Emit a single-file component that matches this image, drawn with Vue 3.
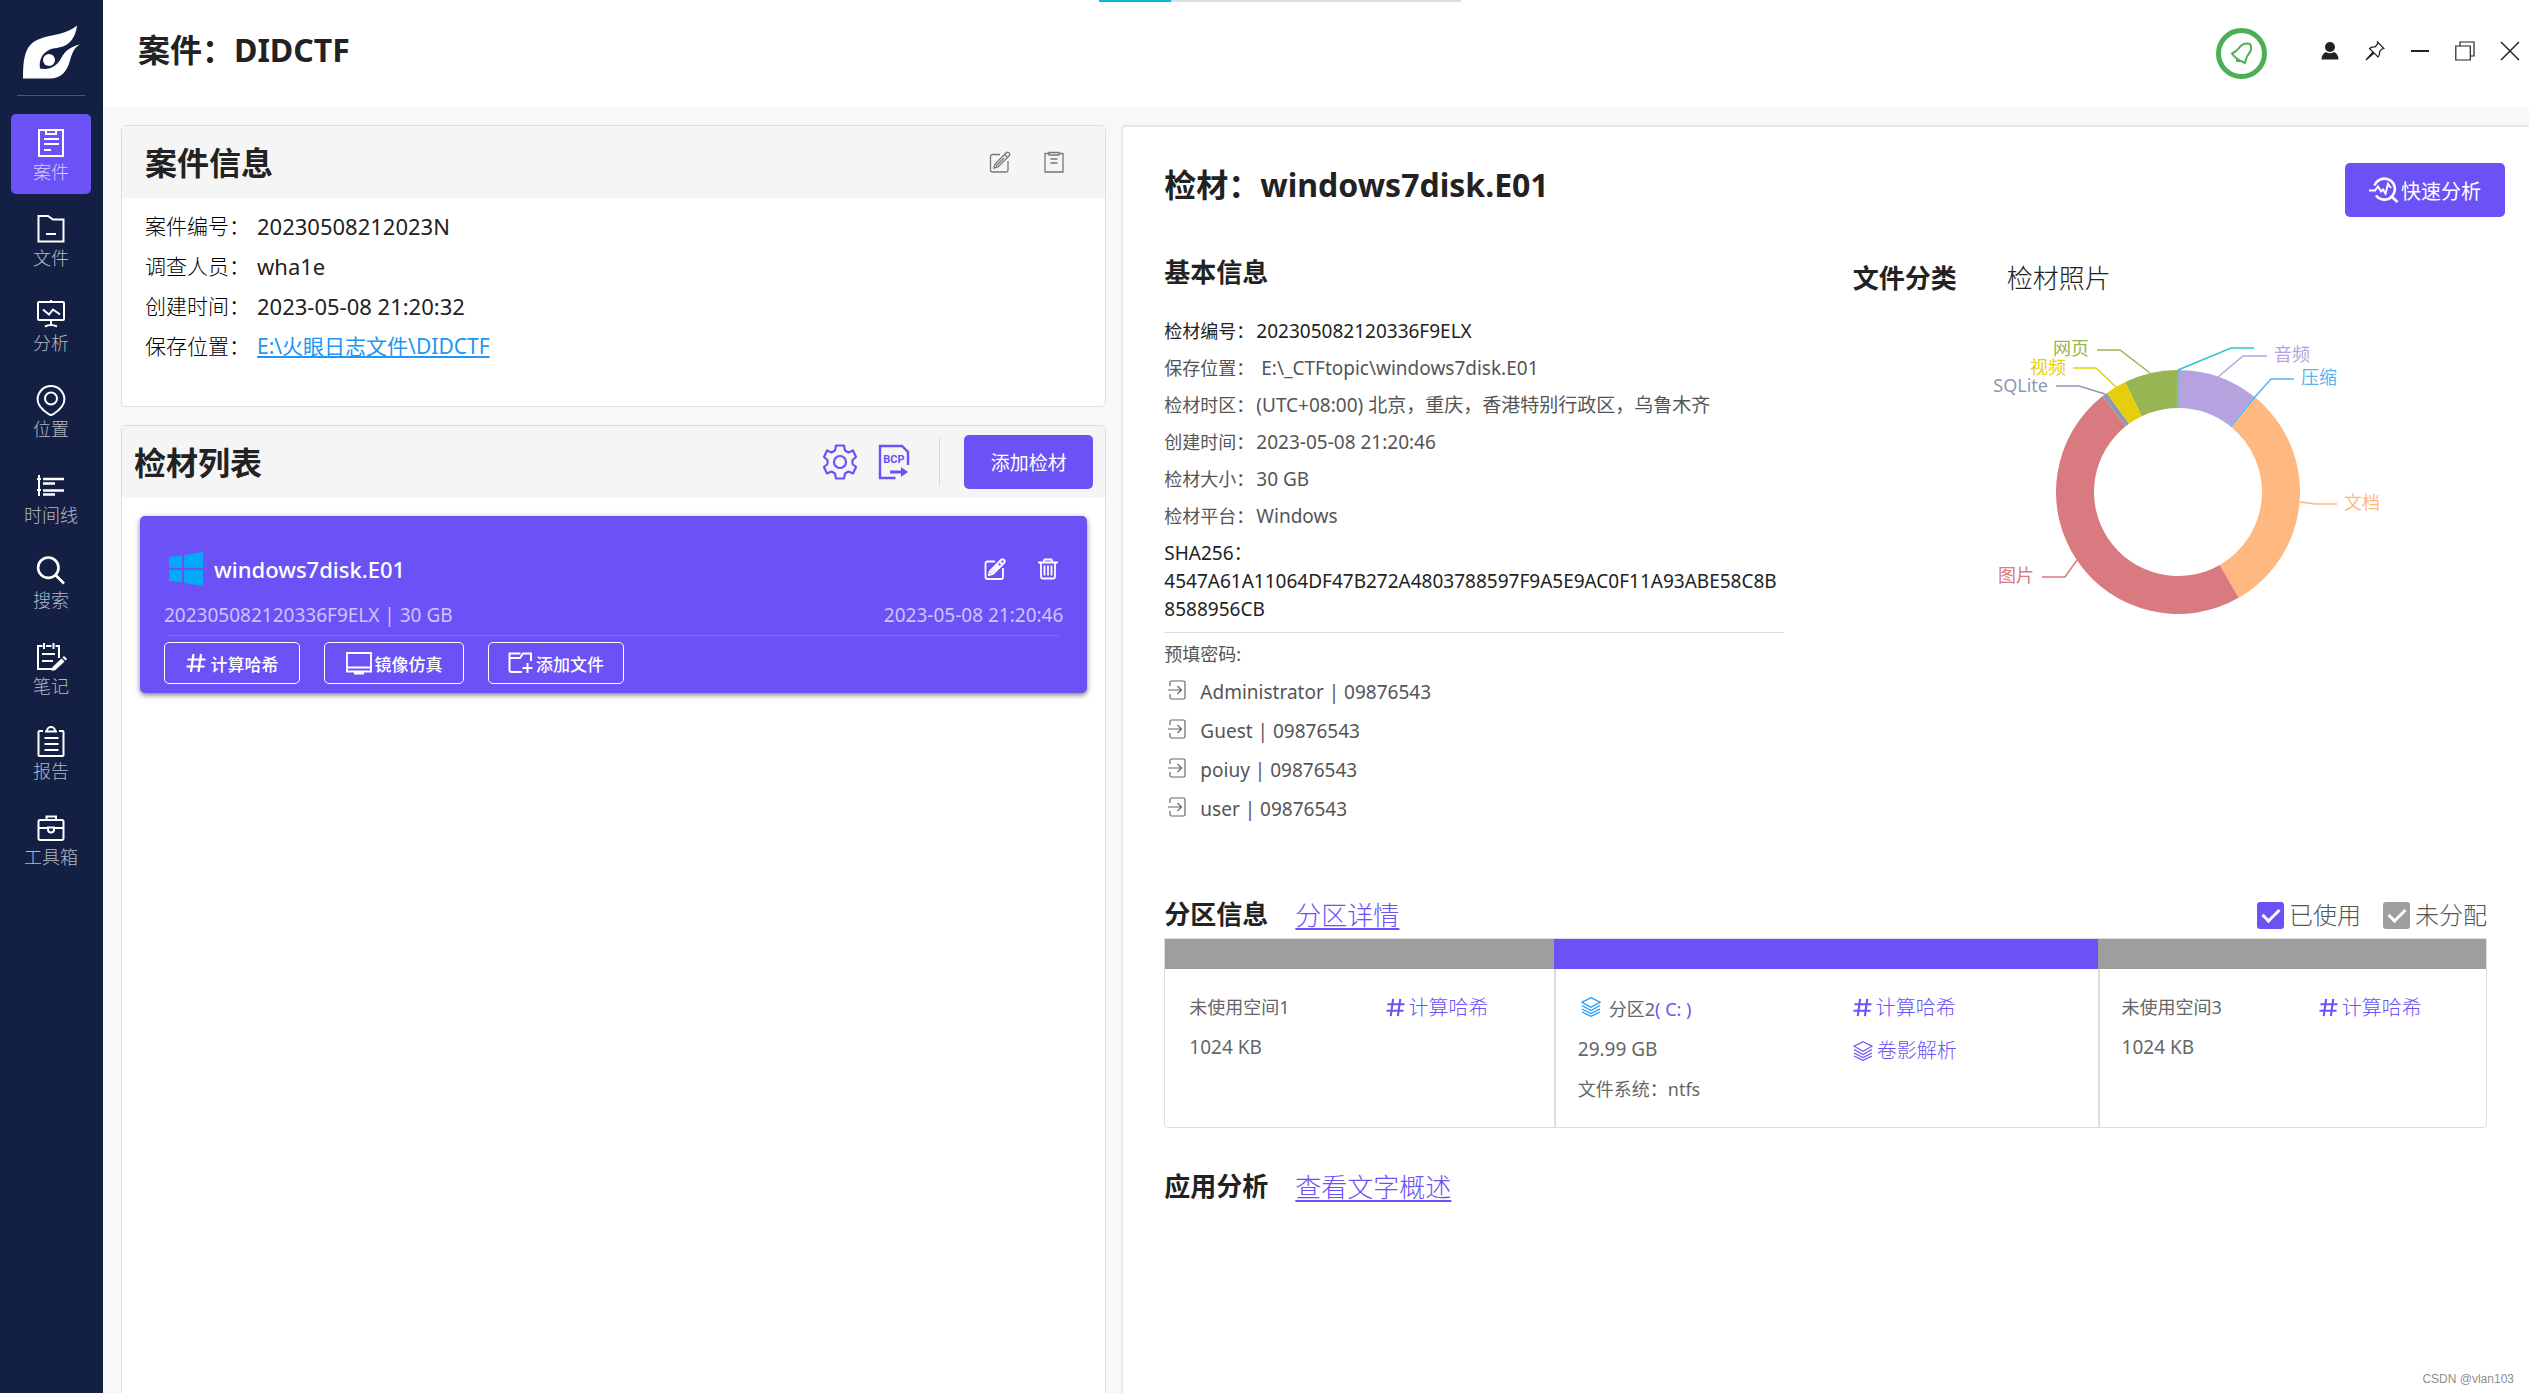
<script setup>
import { ref } from 'vue'

const nav = [
  { label: '案件', lines: ['M4 3h24v26H4z', 'M11 3v4h10V3', 'M9 12h15M9 17h15M9 23h7'] },
  { label: '文件', lines: ['M3.5 3H13l5 3.5h10.500V28.500h-25z', 'M11 21h10'] },
  { label: '分析', lines: ['M4 4h24a1 1 0 0 1 1 1v16a1 1 0 0 1-1 1H4a1 1 0 0 1-1-1V5a1 1 0 0 1 1-1z', 'M16 2v2M16 22v5', 'M10 28.500q6-3 12 0', 'M8 11.500l6 5 4-5 7 5'] },
  { label: '位置', lines: ['M16 2a13.400 13.400 0 0 1 13.400 13.400C29.400 21 23 27 18.500 30a4 4 0 0 1-5 0C9 27 2.600 21 2.600 15.400A13.400 13.400 0 0 1 16 2z', 'M22 14.500a6 6 0 1 1-12 0 6 6 0 1 1 12 0z'] },
  { label: '时间线', lines: ['M4 5v21M2 9h4M2 20h4'], bold: ['M8 9h21M8 13.500h12M8 20.500h21M8 24.500h12'] },
  { label: '搜索', bold: ['M23.500 12.700a10.200 10.200 0 1 1-20.400 0 10.200 10.200 0 1 1 20.400 0z', 'M20.500 20l8.500 8.500'] },
  { label: '笔记', lines: ['M17 28H3V5h4.500M11 5h5.500M20.500 5H24v12', 'M9 2v6M18.500 2v6', 'M7 13h13M7 20h11'], shapes: ['M17.500 26l9-8.500 3 3-9 8.500-4 1z', 'M27.500 16.500l1.500-1.500 3 3-1.500 1.500z'] },
  { label: '报告', lines: ['M8 5H4.500a1 1 0 0 0-1 1v23a1 1 0 0 0 1 1h23a1 1 0 0 0 1-1V6a1 1 0 0 0-1-1H24', 'M10 5.500h12M12 5a4 4 0 0 1 8 0', 'M9.500 12h14M9.500 18h14M9.500 24h14'] },
  { label: '工具箱', lines: ['M5 8h22a1.500 1.500 0 0 1 1.500 1.500v17A1.500 1.500 0 0 1 27 28H5a1.500 1.500 0 0 1-1.500-1.500v-17A1.500 1.500 0 0 1 5 8z', 'M11.500 8V4.500h9.500V8', 'M3.500 16h9M19.500 16h9', 'M13 15.500h6v2a3 3 0 0 1-6 0z'] }
]

const caseInfo = [
  { label: '案件编号：', value: '20230508212023N' },
  { label: '调查人员：', value: 'wha1e' },
  { label: '创建时间：', value: '2023-05-08 21:20:32' },
  { label: '保存位置：', value: 'E:\\火眼日志文件\\DIDCTF', link: true }
]

const evidence = [
  { label: '检材编号：', value: '202305082120336F9ELX', dark: true },
  { label: '保存位置：', value: '\u00a0E:\\_CTFtopic\\windows7disk.E01' },
  { label: '检材时区：', value: '(UTC+08:00) 北京，重庆，香港特别行政区，乌鲁木齐' },
  { label: '创建时间：', value: '2023-05-08 21:20:46' },
  { label: '检材大小：', value: '30 GB' },
  { label: '检材平台：', value: 'Windows' }
]

const accounts = ['Administrator', 'Guest', 'poiuy', 'user']

const partitions = [
  { name: '未使用空间1', size: '1024 KB' },
  { name: '分区2', drive: '( C: )', size: '29.99 GB', fs: '文件系统：ntfs', used: true },
  { name: '未使用空间3', size: '1024 KB' }
]

const showUsed = ref(true)
const showFree = ref(true)

const CX = 199
const CY = 152
const R = 122
const r = 84
const point = (deg, radius) => {
  const a = (deg * Math.PI) / 180
  return `${(CX + radius * Math.sin(a)).toFixed(2)} ${(CY - radius * Math.cos(a)).toFixed(2)}`
}
const ring = (from, to) => {
  const large = to - from > 180 ? 1 : 0
  return `M${point(from, R)}A${R} ${R} 0 ${large} 1 ${point(to, R)}L${point(to, r)}A${r} ${r} 0 ${large} 0 ${point(from, r)}Z`
}
const slices = [
  { label: '音频', color: '#b6a2de', from: 0, to: 38.5, line: '239,37 264,16 288,16', x: 295, y: 15 },
  { label: '压缩', color: '#5ab1ef', from: 38.5, to: 39.5, line: '275,58 292,39 315,39', x: 322, y: 38 },
  { label: '文档', color: '#ffb980', from: 39.5, to: 150.2, line: '321,162 336,164 358,164', x: 365, y: 163 },
  { label: '图片', color: '#d87a80', from: 150.2, to: 321.7, line: '98,220 86,237 63,237', x: 55, y: 236, end: true },
  { label: 'SQLite', color: '#8d98b3', from: 321.7, to: 324.3, line: '126,54 100,46 77,46', x: 69, y: 46, end: true },
  { label: '视频', color: '#e5cf0d', from: 324.3, to: 334.4, line: '137,47 117,28 94,28', x: 87, y: 28, end: true },
  { label: '网页', color: '#97b552', from: 334.4, to: 359.6, line: '171,33 141,10 118,10', x: 110, y: 9, end: true },
  { label: '', color: '#2ec7c9', from: 359.6, to: 360.2, line: '199,30 252,8 275,8' }
]
const labelled = slices.filter((s) => s.label)
</script>

<template>
  <div class="app">
    <aside class="sidebar">
      <svg class="logo" viewBox="0 0 60 54" aria-hidden="true">
        <path fill="#fff" d="M1 52.500C1 38 2 29 6 22 12 12 24 11 37 8c8-2 14-5 18-8.500-1 8-4 15-10 19-6 4-14 3-19 6-7 4-9 11-8 18 10 2 17-3 21-10 4-8 10-12 19-14-6 3-8 9-10 16-3 11-9 18-20 18H1z" />
        <circle cx="27" cy="34" r="6" fill="#fff" />
      </svg>
      <hr class="rule" />
      <nav class="nav">
        <a v-for="(n, i) in nav" :key="n.label" href="#" class="nav-item" :class="{ active: i === 0 }">
          <svg class="nav-icon" viewBox="0 0 32 32" aria-hidden="true">
            <path v-for="d in n.lines" :key="d" :d="d" fill="none" stroke="#fff" stroke-width="2" />
            <path v-for="d in n.bold" :key="d" :d="d" fill="none" stroke="#fff" stroke-width="2.600" />
            <path v-for="d in n.shapes" :key="d" :d="d" fill="#fff" />
          </svg>
          <span>{{ n.label }}</span>
        </a>
      </nav>
    </aside>

    <div class="page">
      <header class="topbar">
        <h1>案件：DIDCTF</h1>
        <div class="window-tools">
          <button class="notify" aria-label="通知">
            <svg width="24" height="24" viewBox="0 0 24 24" fill="none" stroke="#4caf50" stroke-width="2" stroke-linejoin="round">
              <path d="M2 11.500C5 10 7 9 9 6c3-4 7-5 11-4 2 4 1 8-2 11-2 2-2 5-3 8C10 19 5 16 2 11.500z" />
              <path d="M7 16v3h3" fill="#4caf50" />
            </svg>
          </button>
          <button class="tool" aria-label="用户">
            <svg viewBox="0 0 20 20" fill="#222"><circle cx="10" cy="6" r="5" /><path d="M1.500 18.500c0-4 2-6.500 4.500-7.500 2.500 1.700 5.500 1.700 8 0 2.500 1 4.500 3.500 4.500 7.500z" /></svg>
          </button>
          <button class="tool" aria-label="置顶">
            <svg viewBox="0 0 20 20" fill="none" stroke="#222" stroke-width="1.200"><path d="M12.500 1l6.500 6.500-2 .5-2.500 2.500c.5 2.500 0 4-1.500 5.500L4.500 7.500C6 6 8 5.500 10 6L12.500 3zM8 11l-7 8 8-7" /></svg>
          </button>
          <button class="tool" aria-label="最小化">
            <svg viewBox="0 0 20 20" stroke="#222" stroke-width="2"><path d="M1 10h18" /></svg>
          </button>
          <button class="tool" aria-label="还原">
            <svg viewBox="0 0 20 20" fill="none" stroke="#222" stroke-width="1.200"><path d="M.8 5h14.500v14H.8zM5 5V1h14v14h-3.700" /></svg>
          </button>
          <button class="tool" aria-label="关闭">
            <svg viewBox="0 0 20 20" stroke="#222" stroke-width="1.500"><path d="M1 1l18 18M19 1L1 19" /></svg>
          </button>
        </div>
      </header>

      <main class="columns">
        <div class="left">
          <section class="panel case-panel">
            <header class="panel-head case-head">
              <h2>案件信息</h2>
              <button class="icon-btn" aria-label="编辑案件">
                <svg width="22" height="22" viewBox="0 0 22 22" fill="none" stroke="#777" stroke-width="1.300"><path d="M11 3.500H3.500a2 2 0 0 0-2 2V19a2 2 0 0 0 2 2H17a2 2 0 0 0 2-2v-9" /><path d="M5 17l1-4L17 2a2 2 0 0 1 3 3L9 16zM15.500 3.500l3 3M7 15l8-8" /></svg>
              </button>
              <button class="icon-btn" aria-label="案件记录">
                <svg width="22" height="22" viewBox="0 0 22 22" fill="none" stroke="#777" stroke-width="1.300"><path d="M6 2.500H2V21h18V2.500h-4" /><path d="M6 1.500h10v2.500H6zM7.500 8h7M7.500 12h7" /></svg>
              </button>
            </header>
            <dl class="case-info">
              <div v-for="c in caseInfo" :key="c.label">
                <dt>{{ c.label }}</dt>
                <dd v-if="c.link"><a href="#">{{ c.value }}</a></dd>
                <dd v-else class="plain">{{ c.value }}</dd>
              </div>
            </dl>
          </section>

          <section class="panel list-panel">
            <header class="panel-head list-head">
              <h2>检材列表</h2>
              <button class="icon-btn" aria-label="设置">
                <svg width="34" height="36" viewBox="0 0 34 36" fill="none" stroke="#6b52f6" stroke-width="2.200" stroke-linejoin="round">
                  <path d="M13 1.500h8l1 5 3.500 2L30 6.500l3 6.500-3.500 3v4l3.500 3-3 6.500-4.500-2-3.500 2-1 5h-8l-1-5-3.500-2-4.500 2L1 23l3.500-3v-4L1 13l3-6.500 4.500 2 3.500-2z" />
                  <circle cx="17" cy="18" r="6" />
                </svg>
              </button>
              <button class="icon-btn" aria-label="导出BCP">
                <svg width="34" height="36" viewBox="0 0 34 36" fill="none" stroke="#6b52f6" stroke-width="2.400">
                  <path d="M18.500 34H3V2h22l6 6v13" /><path d="M13 28h12" stroke-width="3" /><path d="M24 23l7 5-7 5z" fill="#6b52f6" stroke="none" />
                  <text x="17" y="19" class="bcp">BCP</text>
                </svg>
              </button>
              <span class="bar"></span>
              <button class="primary add">添加检材</button>
            </header>

            <article class="disk">
              <div class="disk-title">
                <svg width="36" height="36" viewBox="0 0 36 36" fill="#03a9f4" aria-hidden="true"><path d="M1 6l13-1.800v12.600H1zM16 4l19-3v15.800H16zM1 19h13v12.500L1 30zM16 19h19v16l-19-3z" /></svg>
                <h3>windows7disk.E01</h3>
                <button class="icon-btn" aria-label="编辑检材">
                  <svg width="22" height="22" viewBox="0 0 22 22" fill="none" stroke="#fff" stroke-width="1.800"><path d="M11 3.500H3.500a2 2 0 0 0-2 2V19a2 2 0 0 0 2 2H17a2 2 0 0 0 2-2v-9" /><path d="M5 17l1-4L17 2a2 2 0 0 1 3 3L9 16zM15.500 3.500l3 3M7 15l8-8" /></svg>
                </button>
                <button class="icon-btn" aria-label="删除检材">
                  <svg width="22" height="22" viewBox="0 0 22 22" fill="none" stroke="#fff" stroke-width="1.800"><path d="M1 4.500h20M6.500 4l1-2.500h7l1 2.500M4 5v14a1.500 1.500 0 0 0 1.500 1.500h11A1.500 1.500 0 0 0 18 19V5M7.500 7.500v10M11 7.500v10M14.500 7.500v10" /></svg>
                </button>
              </div>
              <div class="disk-meta"><span>202305082120336F9ELX | 30 GB</span><time>2023-05-08 21:20:46</time></div>
              <hr />
              <div class="disk-actions">
                <button>
                  <svg width="20" height="20" viewBox="0 0 20 20" stroke="#fff" stroke-width="2.200"><path d="M7.500 1l-2.500 18M15 1l-2.500 18M1.500 6.500h18M.5 13.500h18" /></svg>
                  <span class="spaced">计算哈希</span>
                </button>
                <button class="wide">
                  <svg width="26" height="24" viewBox="0 0 26 24" fill="none" stroke="#fff" stroke-width="1.800"><path d="M1 2h24v18.500H1zM1 16.500h24M13 20v3M8 22.500h10" /></svg>
                  <span>镜像仿真</span>
                </button>
                <button>
                  <svg width="25" height="22" viewBox="0 0 25 22" fill="none" stroke="#fff" stroke-width="2"><path d="M14 20H3.500a2 2 0 0 1-2-2V1.500h11M1.500 6H12l3-4.500h8V9M19.500 11v10M14.500 16h10" /></svg>
                  <span>添加文件</span>
                </button>
              </div>
            </article>
          </section>
        </div>

        <section class="detail">
          <header class="detail-head">
            <h2>检材：windows7disk.E01</h2>
            <button class="primary quick">
              <svg width="30" height="26" viewBox="0 0 30 26" fill="none" stroke="#fff" stroke-width="2"><path d="M5.500 8.500A10.500 10.500 0 1 1 7 18.500" stroke-width="2.600" /><path d="M23 20l5.500 5" stroke-width="2.600" /><path d="M0 13.500h6l3-4 3 5 2-2 2.500 4L19 7l3 4" /></svg>
              <span>快速分析</span>
            </button>
          </header>

          <div class="overview">
            <div class="basic">
              <h3>基本信息</h3>
              <dl class="facts">
                <div v-for="e in evidence" :key="e.label" :class="{ dark: e.dark }">
                  <dt>{{ e.label }}</dt><dd>{{ e.value }}</dd>
                </div>
              </dl>
              <p class="sha">SHA256：<br />4547A61A11064DF47B272A4803788597F9A5E9AC0F11A93ABE58C8B8588956CB</p>
              <p class="pwd-title">预填密码:</p>
              <ul class="accounts">
                <li v-for="a in accounts" :key="a">
                  <svg width="18" height="20" viewBox="0 0 18 20" fill="none" stroke="#666" stroke-width="1.200" aria-hidden="true"><path d="M2 6V2.500A1.500 1.500 0 0 1 3.500 1h12A1.500 1.500 0 0 1 17 2.500v15a1.500 1.500 0 0 1-1.500 1.500h-12A1.500 1.500 0 0 1 2 17.500V14M0 10h13M9.500 6l4 4-4 4" /></svg>
                  <span>{{ a }} | 09876543</span>
                </li>
              </ul>
            </div>

            <div class="files">
              <div class="tabs"><button class="on">文件分类</button><button>检材照片</button></div>
              <svg class="donut" width="420" height="280" viewBox="0 0 420 280" role="img" aria-label="文件分类">
                <path v-for="s in slices" :key="s.color" :d="ring(s.from, s.to)" :fill="s.color" />
                <polyline v-for="s in slices" :key="s.line" :points="s.line" fill="none" :stroke="s.color" stroke-width="1.500" />
                <text v-for="s in labelled" :key="s.label" :x="s.x" :y="s.y + 6" :fill="s.color" :text-anchor="s.end ? 'end' : 'start'">{{ s.label }}</text>
              </svg>
            </div>
          </div>

          <div class="part-head">
            <h3>分区信息</h3>
            <a href="#">分区详情</a>
            <label class="check"><input v-model="showUsed" type="checkbox" />已使用</label>
            <label class="check grey"><input v-model="showFree" type="checkbox" />未分配</label>
          </div>
          <div class="parts">
            <div v-for="p in partitions" :key="p.name" class="part" :class="{ used: p.used }">
              <div class="part-body">
                <div class="part-text">
                  <p class="part-name">
                    <svg v-if="p.used" width="20" height="20" viewBox="0 0 20 20" fill="none" stroke="#2196f3" stroke-width="1.300"><path d="M10 .7l9 4.500-9 5-9-5zM1 8.500l9 5 9-5M1 12l9 4.500 9-4.500M1 15l9 4.300 9-4.300" /></svg>
                    {{ p.name }}<em v-if="p.drive">{{ p.drive }}</em>
                  </p>
                  <p>{{ p.size }}</p>
                  <p v-if="p.fs" class="part-name">{{ p.fs }}</p>
                </div>
                <div class="part-links">
                  <button>
                    <svg width="19" height="19" viewBox="0 0 20 20" stroke="#6b52f6" stroke-width="2.200"><path d="M7.500 1l-2.500 18M15 1l-2.500 18M1.500 6.500h18M.5 13.500h18" /></svg>
                    <span>计算哈希</span>
                  </button>
                  <button v-if="p.used">
                    <svg width="20" height="20" viewBox="0 0 20 20" fill="none" stroke="#6b52f6" stroke-width="1.200"><path d="M10 .7l9 4.500-9 5-9-5zM1 8.500l9 5 9-5M1 12l9 4.500 9-4.500M1 15l9 4.300 9-4.300" /></svg>
                    <span>卷影解析</span>
                  </button>
                </div>
              </div>
            </div>
          </div>

          <div class="app-head">
            <h3>应用分析</h3>
            <a href="#">查看文字概述</a>
          </div>
        </section>
      </main>
    </div>
    <div class="progress"><span></span></div>
    <p class="credit">CSDN @vlan103</p>
  </div>
</template>

<style>
body {
  margin: 0;
  overflow: hidden;
}
</style>

<style scoped>
.app {
  position: relative;
  display: flex;
  min-height: 100vh;
  overflow: hidden;
  background: #f8f8f8;
  color: #222;
  font-family: "Noto Sans", "Noto Sans CJK SC", sans-serif;
  font-size: 19px;
}
h1, h2, h3, p, dl, dd, ul { margin: 0; padding: 0; }
button {
  padding: 0;
  border: 0;
  background: none;
  color: inherit;
  font: inherit;
}
svg { display: block; flex: none; }
a { color: #6b52f6; }

.sidebar {
  flex: none;
  box-sizing: border-box;
  width: 103px;
  padding-top: 26px;
  background: #142043;
}
.logo { width: 60px; height: 54px; margin-left: 22px; overflow: visible; }
.rule { width: 68px; margin: 15px 0 18px 17px; border: 0; border-top: 1px solid #46558a; }
.nav {
  display: flex;
  flex-direction: column;
  justify-content: space-between;
  height: 765px;
  margin: 0 12px 0 11px;
}
.nav-item {
  display: flex;
  flex-direction: column;
  align-items: center;
  box-sizing: border-box;
  height: 80px;
  padding-top: 13px;
  border-radius: 5px;
  color: #b4b8c4;
  font-size: 18px;
  font-weight: 300;
  line-height: 26px;
  text-decoration: none;
}
.nav-item.active { background: #6b52f6; color: #d4cdfc; }
.nav-icon { width: 32px; height: 32px; }

.page { display: flex; flex: 1; flex-direction: column; min-width: 0; }
.topbar {
  display: flex;
  justify-content: space-between;
  box-sizing: border-box;
  height: 107px;
  padding: 28px 9px 0 35px;
  background: #fff;
}
h1, h2 { font-size: 32px; font-weight: 700; line-height: 44px; }
h3 { font-size: 26px; font-weight: 700; line-height: 36px; }
.window-tools { display: flex; align-items: flex-start; gap: 25px; }
.notify {
  display: flex;
  align-items: center;
  justify-content: center;
  width: 51px;
  height: 51px;
  margin-right: 28px;
  border: 5px solid #4caf50;
  border-radius: 50%;
}
.tool { padding-top: 13px; }
.tool svg { width: 20px; height: 20px; }

.columns {
  display: grid;
  flex: 1;
  grid-template-columns: 7fr 10fr;
  gap: 15px;
  padding: 18px 0 0 18px;
}
.left { display: flex; flex-direction: column; gap: 18px; min-width: 0; }
.panel { box-sizing: border-box; border: 1px solid #dfdfdf; border-radius: 5px; background: #fff; }
.panel-head {
  display: flex;
  align-items: center;
  height: 72px;
  border-radius: 4px 4px 0 0;
  background: #f5f5f5;
}
.panel-head h2 { flex: 1; padding-top: 2px; }
.case-panel { height: 282px; }
.case-head { gap: 32px; padding: 0 40px 0 23px; }
.case-info { padding: 8px 23px; font-size: 21px; line-height: 40px; }
.case-info div { display: flex; height: 40px; }
.case-info dt { width: 112px; color: #000; font-weight: 300; }
.case-info .plain { font-size: 22px; }
.case-info a { color: #2196f3; }
.list-panel { flex: 1; border-bottom: 0; border-radius: 5px 5px 0 0; }
.list-head { padding: 0 12px; }
.list-head .icon-btn + .icon-btn { margin-left: 20px; }
.bcp { fill: #6b52f6; stroke: none; font-family: Roboto, sans-serif; font-size: 11px; font-weight: 700; text-anchor: middle; }
.bar { width: 1px; height: 48px; margin: 0 24px 0 28px; background: #d8d8d8; }
.primary { height: 54px; border-radius: 5px; background: #6b52f6; color: #fff; }
.add { width: 129px; }

.disk {
  box-sizing: border-box;
  height: 177px;
  margin: 18px;
  padding: 33px 24px 0;
  border-radius: 5px;
  background: #6b52f6;
  box-shadow: 0 2px 4px rgba(0, 0, 0, 0.4), 0 2px 8px rgba(0, 0, 0, 0.15);
  color: #fff;
}
.disk-title { display: flex; align-items: center; height: 40px; padding: 0 4px; }
.disk-title h3 { flex: 1; margin-left: 10px; font-size: 22px; font-weight: 500; }
.disk-title .icon-btn + .icon-btn { margin-left: 31px; }
.disk-meta { display: flex; justify-content: space-between; margin-top: 12px; color: #cdc4fc; line-height: 28px; }
.disk hr { margin: 6px 4px; border: 0; border-top: 1px solid #7f69f7; }
.disk-actions { display: flex; gap: 24px; }
.disk-actions button {
  display: flex;
  align-items: center;
  justify-content: center;
  gap: 3px;
  box-sizing: border-box;
  width: 136px;
  height: 42px;
  border: 1px solid #fff;
  border-radius: 5px;
  font-size: 17px;
  font-weight: 500;
}
.disk-actions .wide { width: 140px; }
.spaced { margin-left: 2px; }

.detail {
  min-width: 0;
  padding: 36px 42px 0 41px;
  border: 2px solid #e8e8e8;
  border-width: 2px 0 0 2px;
  border-radius: 5px 0 0;
  background: #fff;
}
.detail-head { display: flex; justify-content: space-between; margin-right: -18px; }
.quick { display: flex; align-items: center; justify-content: center; gap: 2px; width: 160px; font-size: 20px; }
.overview { display: grid; grid-template-columns: 619fr 634fr; gap: 69px; margin-top: 37px; }
.basic { min-width: 0; color: #555; }
.basic h3 { color: #222; }
.facts { margin-top: 23px; line-height: 37px; }
.facts div { display: flex; }
.facts dt { width: 92px; font-size: 18px; }
.facts dd { white-space: nowrap; }
.facts .dark, .sha { color: #222; }
.sha { padding: 4px 0 9px; border-bottom: 1px solid #ddd; line-height: 28px; word-break: break-all; }
.pwd-title { margin-top: 3px; font-size: 18px; line-height: 36px; }
.accounts { list-style: none; }
.accounts li { display: flex; align-items: center; gap: 14px; height: 39px; padding-left: 4px; }
.accounts svg { margin-bottom: 4px; }

.tabs { display: flex; gap: 50px; padding-top: 6px; font-size: 26px; line-height: 36px; }
.tabs button { font-weight: 300; }
.tabs .on { font-weight: 700; }
.donut { margin: 44px 0 0 126px; overflow: visible; font-size: 18px; }

.part-head, .app-head { display: flex; align-items: center; height: 36px; }
.part-head { margin-top: 68px; }
.part-head a, .app-head a { margin-left: 27px; padding-top: 2px; font-size: 26px; font-weight: 300; line-height: 36px; text-underline-offset: 3px; }
.part-head a { margin-right: auto; }
.check { display: flex; align-items: center; gap: 5px; margin-left: 22px; padding-top: 2px; color: #555; font-size: 24px; font-weight: 300; line-height: 36px; }
.check input {
  display: flex;
  justify-content: center;
  appearance: none;
  width: 27px;
  height: 27px;
  margin: 0;
  border-radius: 3px;
  background: #6b52f6;
}
.check.grey input { background: #9e9e9e; }
.check input:checked::after {
  width: 7px;
  height: 14px;
  margin-top: 3px;
  border: solid #fff;
  border-width: 0 3px 3px 0;
  content: "";
  transform: rotate(45deg);
}
.parts {
  display: grid;
  grid-template-columns: 5fr 7fr 5fr;
  box-sizing: border-box;
  height: 190px;
  margin-top: 6px;
  border: 1px solid #ddd;
  border-radius: 0 0 4px 4px;
}
.part { border-top: 30px solid #9e9e9e; color: #666; }
.part.used { border-top-color: #6b52f6; }
.part-body { display: flex; height: 100%; }
.part + .part .part-body { border-left: 2px solid #ddd; }
.part-text, .part-links { box-sizing: border-box; width: 50%; line-height: 40px; }
.part-text { padding: 18px 0 0 24px; }
.part + .part .part-text { padding-left: 22px; }
.used .part-text { padding-top: 20px; }
.part-text p { display: flex; align-items: center; height: 40px; }
.part-text .part-name { font-size: 18px; }
.part-text svg { margin: 0 8px 4px 3px; }
.part-text em { color: #6b52f6; font-style: normal; }
.part-links { padding: 17px 0 0 26px; }
.part-links button { display: flex; align-items: center; gap: 4px; height: 43px; color: #6b52f6; font-size: 20px; font-weight: 300; }
.app-head { margin-top: 40px; }

.progress { position: absolute; top: 0; left: 1099px; width: 362px; height: 2px; background: #ddd; }
.progress span { display: block; width: 20%; height: 2px; background: #00bcd4; }
.credit {
  position: absolute;
  right: 15px;
  bottom: 5px;
  color: #8f8f8f;
  font-family: "Liberation Sans", sans-serif;
  font-size: 12px;
  line-height: 18px;
}
</style>
